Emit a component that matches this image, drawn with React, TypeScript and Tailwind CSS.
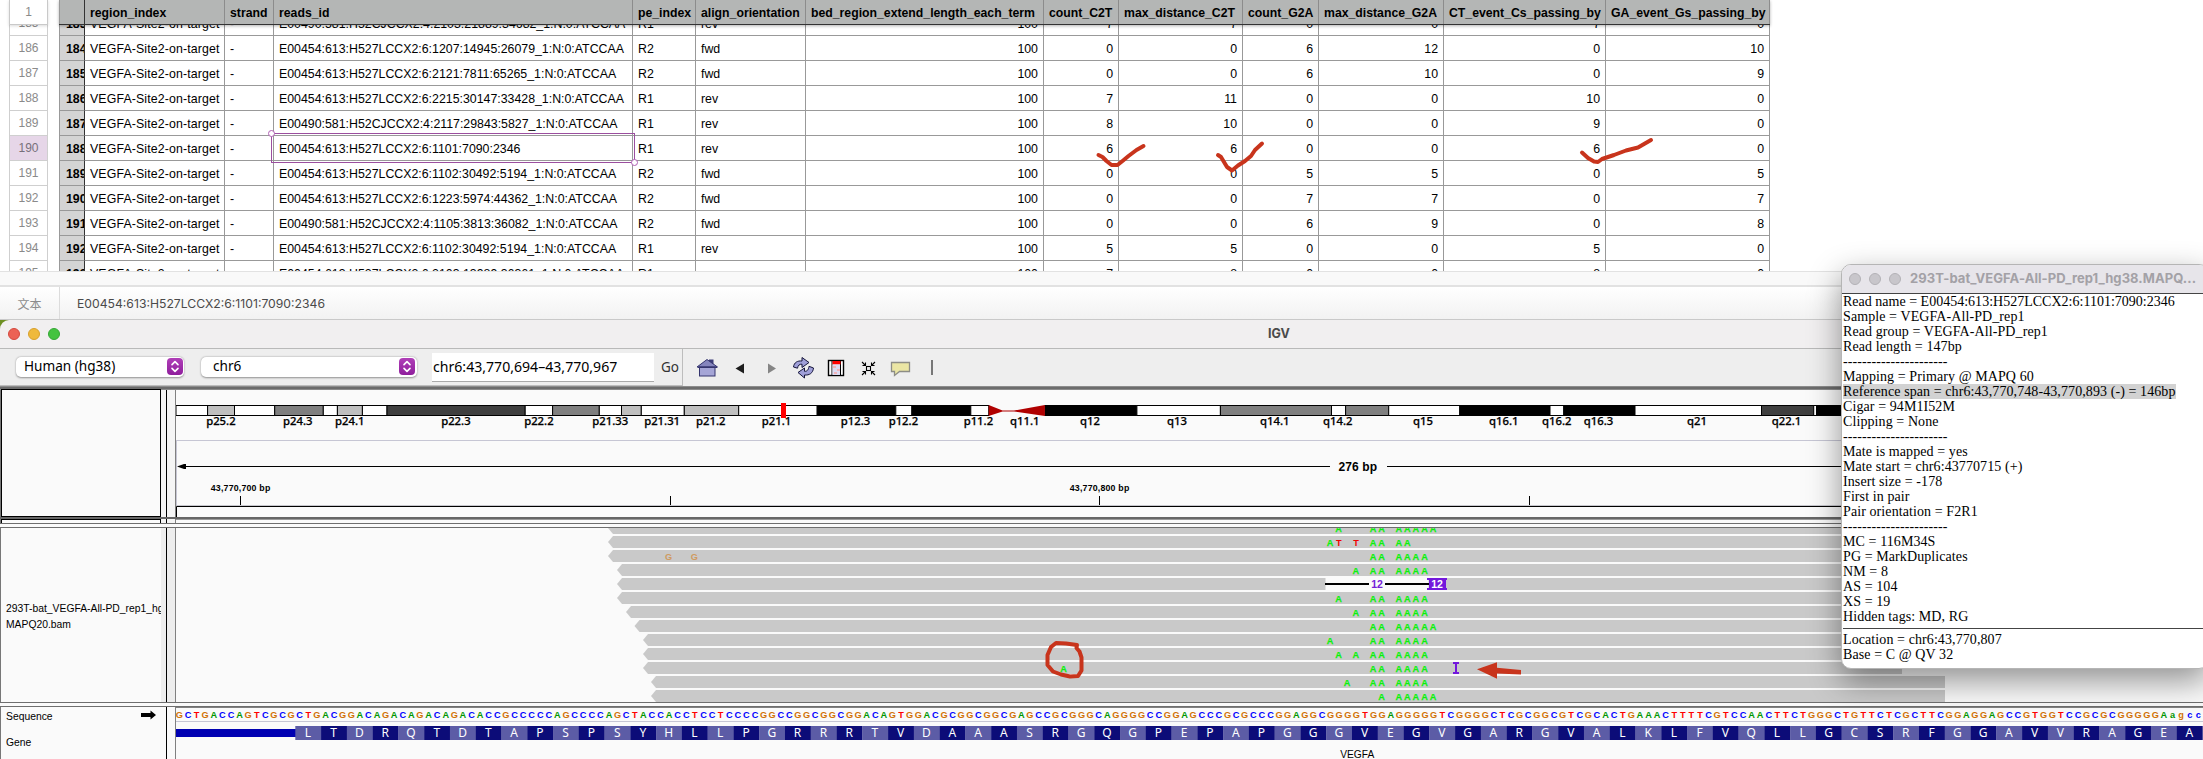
import React from "react";

const GRID =
  "grid grid-cols-[25px_140px_49px_359px_63px_110px_238px_75px_124px_76px_125px_162px_165px] w-[1711px] shrink-0";

const HEADERS = [
  "region_index", "strand", "reads_id", "pe_index", "align_orientation",
  "bed_region_extend_length_each_term", "count_C2T", "max_distance_C2T", "count_G2A",
  "max_distance_G2A", "CT_event_Cs_passing_by", "GA_event_Gs_passing_by",
];

type Row = [number, number, string, string, string, number, number, number, number, number, number];
const ROWS: Row[] = [
  [185, 183, "E00490:581:H52CJCCX2:4:2103:21889:34682_1:N:0:ATCCAA", "R1", "rev", 7, 7, 0, 0, 7, 0],
  [186, 184, "E00454:613:H527LCCX2:6:1207:14945:26079_1:N:0:ATCCAA", "R2", "fwd", 0, 0, 6, 12, 0, 10],
  [187, 185, "E00454:613:H527LCCX2:6:2121:7811:65265_1:N:0:ATCCAA", "R2", "fwd", 0, 0, 6, 10, 0, 9],
  [188, 186, "E00454:613:H527LCCX2:6:2215:30147:33428_1:N:0:ATCCAA", "R1", "rev", 7, 11, 0, 0, 10, 0],
  [189, 187, "E00490:581:H52CJCCX2:4:2117:29843:5827_1:N:0:ATCCAA", "R1", "rev", 8, 10, 0, 0, 9, 0],
  [190, 188, "E00454:613:H527LCCX2:6:1101:7090:2346", "R1", "rev", 6, 6, 0, 0, 6, 0],
  [191, 189, "E00454:613:H527LCCX2:6:1102:30492:5194_1:N:0:ATCCAA", "R2", "fwd", 0, 0, 5, 5, 0, 5],
  [192, 190, "E00454:613:H527LCCX2:6:1223:5974:44362_1:N:0:ATCCAA", "R2", "fwd", 0, 0, 7, 7, 0, 7],
  [193, 191, "E00490:581:H52CJCCX2:4:1105:3813:36082_1:N:0:ATCCAA", "R2", "fwd", 0, 0, 6, 9, 0, 8],
  [194, 192, "E00454:613:H527LCCX2:6:1102:30492:5194_1:N:0:ATCCAA", "R1", "rev", 5, 5, 0, 0, 5, 0],
  [195, 193, "E00454:613:H527LCCX2:6:2103:13989:36361_1:N:0:ATCCAA", "R1", "rev", 7, 8, 0, 0, 8, 0],
];

function Sheet() {
  return (
    <div className="relative h-[271px] overflow-hidden bg-white text-[12.35px] text-black">
      <div className="relative z-10 flex h-[25px]">
        <div className="ml-[9px] mr-[11px] flex w-[39px] items-center justify-center border-x border-b border-[#c9c9c9] bg-white text-[12px] text-[#8a8a8a] shadow-[0_1px_3px_rgba(0,0,0,0.15)]">
          1
        </div>
        <div className={`${GRID} border-b border-[#333] bg-[#b4b6b5] text-[12.25px] font-bold shadow-[0_1px_3px_rgba(0,0,0,0.3)]`}>
          <div className="border-l border-[#999]" />
          {HEADERS.map((h, i) => (
            <div
              key={h}
              className={`flex items-center whitespace-nowrap border-l pl-[5px] pt-[2px] ${
                i === 0 ? "border-[#333]" : "border-[#8c8c8c]"
              } ${i === 11 ? "border-r" : ""}`}
            >
              {h}
            </div>
          ))}
        </div>
      </div>
      <div className="-mt-[15px]">
        {ROWS.map((r) => (
          <div key={r[0]} className="flex h-[25px]">
            <div
              className={`ml-[9px] mr-[11px] flex w-[39px] items-center justify-center border-x border-t border-[#cfcfcf] text-[12px] ${
                r[0] === 190 ? "bg-[#e6d6e8] text-[#77707a]" : "bg-white text-[#8a8a8a]"
              }`}
            >
              {r[0]}
            </div>
            <div className={GRID}>
              <div className="flex items-center overflow-hidden border-l border-t border-[#999] bg-[#d4d4d4] pl-[6px] pt-[2px] font-bold">
                {r[1]}
              </div>
              <div className="flex items-center whitespace-nowrap border-l border-t border-l-[#333] border-t-[#999] pl-[5px] pt-[2px] tracking-[0.12px]">
                VEGFA-Site2-on-target
              </div>
              <div className="flex items-center border-l border-t border-[#999] pl-[5px] pt-[2px]">-</div>
              {[r[2], r[3], r[4]].map((t, i) => (
                <div key={i} className="flex items-center whitespace-nowrap border-l border-t border-[#999] pl-[5px] pt-[2px]">
                  {t}
                </div>
              ))}
              {[100, r[5], r[6], r[7], r[8], r[9], r[10]].map((t, i) => (
                <div
                  key={i}
                  className={`flex items-center justify-end border-l border-t border-[#999] pr-[5px] pt-[2px] ${i === 6 ? "border-r" : ""}`}
                >
                  {t}
                </div>
              ))}
            </div>
          </div>
        ))}
      </div>
      <div className="absolute left-[271px] top-[133px] h-[30px] w-[364px] border border-[#9b4f9f]">
        <div className="absolute -left-[4px] -top-[4px] size-[7px] rounded-full border border-[#b05fb4] bg-white" />
        <div className="absolute -bottom-[4px] -right-[4px] size-[7px] rounded-full border border-[#b05fb4] bg-white" />
      </div>
    </div>
  );
}

function FormatBar() {
  return (
    <>
      <div className="h-[16px] border-b-2 border-t border-b-[#e2e2e2] border-t-[#e2e2e2] bg-[#f9f9f9]" />
      <div className="flex h-[33px] items-center border-b border-[#c9c9c9] bg-linear-to-b from-white to-[#f2f2f2] font-[Inter]">
        <div className="flex h-full w-[60px] items-center justify-center border-r border-[#dcdcdc] pt-px font-['Noto_Sans_CJK_SC',sans-serif] text-[12px] text-[#8c8c8c]">
          文本
        </div>
        <div className="pl-[17px] pt-[2px] text-[12.2px] text-[#4a4a4a]">E00454:613:H527LCCX2:6:1101:7090:2346</div>
      </div>
    </>
  );
}

function Stepper() {
  return (
    <svg width="16" height="17" viewBox="0 0 16 17" className="shrink-0">
      <defs>
        <linearGradient id="purple" x1="0" y1="0" x2="0" y2="1">
          <stop offset="0" stopColor="#b03fb8" />
          <stop offset="1" stopColor="#8f1e9c" />
        </linearGradient>
      </defs>
      <rect width="16" height="17" rx="4" fill="url(#purple)" />
      <path d="M5 6.6 8 3.6l3 3M5 10.4l3 3 3-3" fill="none" stroke="#fff" strokeWidth="1.6" strokeLinecap="round" strokeLinejoin="round" />
    </svg>
  );
}

function ToolIcons() {
  return (
    <svg width="260" height="38" viewBox="683 348 260 38" className="shrink-0">
      <path d="M709 362v-3.5h4.5v5z" fill="#3d3d78" />
      <path d="M697 366l10-7.5 10.500 7.500z" fill="#8585bd" stroke="#35356e" strokeWidth="1" />
      <rect x="699.500" y="366" width="15.500" height="9" fill="#a5a5d6" stroke="#35356e" />
      <path d="M698 366.500h19" stroke="#35356e" />
      <path d="M735.500 367.500l8.500-5v10z" fill="#1d1d1d" />
      <path d="M776 367.500l-8-5v10z" fill="#858585" />
      <g fill="#9f9fd8" stroke="#15153a" strokeWidth="1" strokeLinejoin="round">
        <path d="M793.500 366c.5-4.500 4-6.500 8.500-6v-3.500l7 5-7 5v-3.300c-2.500-.2-4 1-4.500 4z" />
        <path d="M813.500 367c-.5 5-4 7.500-9 7v3l-6.500-5.500 6.500-4.500v3.300c2.500.2 4-1.300 4.500-5z" />
      </g>
      <rect x="828.500" y="359.500" width="15" height="15" fill="#fff" stroke="#000" strokeWidth="1.400" />
      <path d="M832 360v14M840.500 360v14" stroke="#000" />
      <rect x="832.500" y="360" width="8" height="3.500" fill="#f00" />
      <rect x="832.500" y="363.500" width="7.500" height="10.500" fill="#dcdcf4" />
      <path d="M833 366h3m1 3h3m-6 3h3" stroke="#f3b4b8" strokeWidth="2" />
      <g stroke="#000" strokeWidth="1.100" fill="none">
        <rect x="866.500" y="365.500" width="4" height="4" />
        <path d="M862 361l3.500 3.500M865.500 361.500v3h-3M875 361l-3.500 3.500M871.500 361.500v3h3M862 374l3.500-3.500M865.500 373.500v-3h-3M875 374l-3.500-3.500M871.500 373.500v-3h3" />
      </g>
      <path d="M892.500 362.500h18v9h-10l-5 4v-4h-3z" transform="translate(-1 -1)" fill="#ebe6a4" stroke="#8d8d86" strokeWidth="1.300" />
      <path d="M932 359v15" stroke="#777" strokeWidth="2" />
    </svg>
  );
}

function Toolbar() {
  return (
    <div className="flex h-[38px] items-center border-t border-[#b9b9b9] bg-[#eeeeee] font-['Noto_Sans'] text-[13.6px] text-black">
      <div className="flex h-full w-[683px] items-center border-b border-r border-[#bdbdbd] pl-[16px]">
        <div className="-mt-px flex h-[20px] w-[168px] items-center justify-between rounded-[5px] bg-white pl-[8px] pr-[1px] shadow-[0_0.5px_2px_rgba(0,0,0,0.4)]">
          Human (hg38) <Stepper />
        </div>
        <div className="-mt-px ml-[17px] flex h-[20px] w-[216px] items-center justify-between rounded-[5px] bg-white pl-[12px] pr-[2px] shadow-[0_0.5px_2px_rgba(0,0,0,0.4)]">
          chr6 <Stepper />
        </div>
        <div className="ml-[15px] flex h-[29px] w-[222px] items-center border-b border-[#a9a9a9] bg-white pl-px text-[14.1px]">
          chr6:43,770,694–43,770,967
        </div>
        <div className="pl-[7px] text-[13.500px] text-[#333]">Go</div>
      </div>
      <ToolIcons />
    </div>
  );
}

const BANDS: [number, number, string][] = [
  [176, 207.6, "#fff"], [207.6, 234.5, "#bfbfbf"], [234.5, 274.7, "#fff"], [274.7, 323.3, "#7f7f7f"],
  [323.3, 337.4, "#fff"], [337.4, 362.4, "#bfbfbf"], [362.4, 387, "#fff"], [387, 525.2, "#3f3f3f"],
  [525.2, 552.6, "#fff"], [552.6, 599.3, "#7f7f7f"], [599.3, 621.5, "#fff"], [621.5, 641.3, "#bfbfbf"],
  [641.3, 684.3, "#fff"], [684.3, 738.7, "#bfbfbf"], [738.7, 817.2, "#fff"], [817.2, 895.8, "#000"],
  [895.8, 911.9, "#fff"], [911.9, 970.8, "#000"], [970.8, 988.7, "#fff"], [1044.9, 1136.9, "#000"],
  [1136.9, 1220.4, "#fff"], [1220.4, 1331.5, "#7f7f7f"], [1331.5, 1345.6, "#fff"], [1345.6, 1388.7, "#7f7f7f"],
  [1388.7, 1459.8, "#fff"], [1459.8, 1550, "#000"], [1550, 1563.8, "#fff"], [1563.8, 1635, "#000"],
  [1635, 1761.5, "#fff"], [1761.5, 1813.7, "#3f3f3f"], [1813.7, 1816.5, "#fff"], [1816.5, 1900, "#000"],
];
const BAND_LABELS: [string, number][] = [
  ["p25.2", 220.9], ["p24.3", 297.8], ["p24.1", 349.7], ["p22.3", 455.9], ["p22.2", 538.9], ["p21.33", 610.2],
  ["p21.31", 662.1], ["p21.2", 710.7], ["p21.1", 776.6], ["p12.3", 855.6], ["p12.2", 903.4], ["p11.2", 978.4],
  ["q11.1", 1024.8], ["q12", 1090], ["q13", 1177], ["q14.1", 1274.8], ["q14.2", 1337.7], ["q15", 1423],
  ["q16.1", 1503.7], ["q16.2", 1556.7], ["q16.3", 1598.6], ["q21", 1697], ["q22.1", 1786.5],
];

function Ideogram() {
  return (
    <svg width="2027" height="127" viewBox="176 390 2027 127" className="block">
      {BANDS.map(([a, b, c]) => (
        <rect key={a} x={a} y="405.500" width={b - a} height="10" fill={c} stroke="#000" strokeWidth="1" />
      ))}
      <path d="M988.700 405v11L1002.500 411.500h11.600L1044.900 416v-11L1014 410.500h-11.500z" fill="#b00000" />
      <rect x="781" y="403" width="5" height="15" fill="#f00" />
      {BAND_LABELS.map(([t, x]) => (
        <text key={t} x={x} y="425" textAnchor="middle" className="font-['Noto_Sans'] text-[11.3px] font-medium" stroke="#000" strokeWidth="0.25">
          {t}
        </text>
      ))}
      <path d="M176 440.500H2203" stroke="#c6c6d4" />
      <path d="M176.500 440V505" stroke="#c6c6d4" />
      <path d="M180 466.500H1330M1387 466.500H2203" stroke="#000" />
      <path d="M177 466.500l7-2.500h2v5h-2z" fill="#000" />
      <text x="1357.800" y="471" textAnchor="middle" textLength="38.700" className="font-['Liberation_Sans'] text-[12px] font-bold">276 bp</text>
      <text x="240.500" y="490.500" textAnchor="middle" textLength="59.500" className="font-['Liberation_Sans'] text-[8.800px] font-bold">43,770,700 bp</text>
      <text x="1099.500" y="490.500" textAnchor="middle" textLength="59.500" className="font-['Liberation_Sans'] text-[8.800px] font-bold">43,770,800 bp</text>
      <path d="M240.500 496v9M670.500 496v9M1099.500 496v9M1529.500 496v9" stroke="#000" />
      <path d="M176 505.500H2203" stroke="#c6c6cc" />
      <path d="M176.500 517V506.500H2203" fill="none" stroke="#000" />
    </svg>
  );
}

const BASE_W = 8.591;
const baseX = (i: number) => 179.4 + BASE_W * i;

const TIPS = [608, 608, 608, 617, 617, 617, 626, 634.5, 643, 643, 643, 651, 651];
const COMMON = [139, 140, 142, 143, 144, 145];
const READ_A: number[][] = [
  [135, ...COMMON, 146],
  [134, 139, 140, 142, 143],
  COMMON,
  [137, ...COMMON],
  [],
  [135, ...COMMON],
  [137, ...COMMON],
  [...COMMON, 146],
  [134, ...COMMON],
  [135, 137, ...COMMON],
  [103, ...COMMON],
  [136, ...COMMON],
  [140, 142, 143, 144, 145, 146],
];

function Reads() {
  const letter = "font-['Liberation_Sans'] text-[9.2px] font-bold";
  return (
    <svg width="2027" height="174" viewBox="176 528 2027 174" className="block">
      {TIPS.map((x, k) => {
        const y = 522 + 14 * k;
        const end = k > 10 ? 1945 : 1902;
        return (
          <g key={k}>
            <path d={`M${x} ${y + 6}l5-6H${end}v12H${x + 5}z`} fill="#c9c9c9" />
            {READ_A[k].map((i) => (
              <text key={i} x={baseX(i) - 0.6} y={y + 9.5} textAnchor="middle" fill="#0cf00c" stroke="#0cf00c" strokeWidth="0.25" className={letter}>A</text>
            ))}
          </g>
        );
      })}
      <text x={baseX(135) - 0.3} y="545.500" textAnchor="middle" fill="#f00000" className={letter}>T</text>
      <text x={baseX(137) - 0.3} y="545.500" textAnchor="middle" fill="#f00000" className={letter}>T</text>
      <text x={baseX(57) - 0.6} y="559.500" textAnchor="middle" fill="#cf9a60" className={letter}>G</text>
      <text x={baseX(60) - 0.6} y="559.500" textAnchor="middle" fill="#cf9a60" className={letter}>G</text>
      <rect x="1325.500" y="578" width="103" height="12" fill="#fafafa" />
      <path d="M1325 584H1429" stroke="#000" strokeWidth="2" />
      <rect x="1369" y="578" width="16" height="12" fill="#fafafa" />
      <text x="1377" y="588" textAnchor="middle" fill="#7420d8" className="font-['Liberation_Sans'] text-[10.5px] font-bold">12</text>
      <path d="M1427 578h20v2h-1v8h1v2h-20v-2h2v-8h-2z" fill="#7318dc" />
      <text x="1437" y="588" textAnchor="middle" fill="#fff" className="font-['Liberation_Sans'] text-[10.5px] font-bold">12</text>
      <path d="M1453 663h6M1456 663v10M1453 673h6" stroke="#7318dc" strokeWidth="2" />
    </svg>
  );
}

const SEQ =
  "GCTGACCAGTCGCG" +
  "CTGACGGACAGACAGACAGACACCGCCCCCAGCCCCAGCTACCACCTCCTCCCCGGCCGGCGGCGGACAGTGGACGCGGCGGCGAGCCGCGGGCAGGGGCCGGAGCCCGCGCCCGGAGGCGGGGTGGAGGGGGTCGGG" +
  "GCTCGCGGCGTCGCACTGAAACTTTTCGTCCAACTTCTGGGCTGTTCTCGCTTCGGAGGAGCCGTGGTCCGCGCGGGGGAagcc";
const AMINO = "LTDRQTDTAPSPSYHLLPGRRRTVDAAASRGQGPEPAPGGGVEGVGARGVALKLFVQLLGCSRFGGAVVRAGEA";
const BASE_COLORS: Record<string, string> = { A: "#009600", C: "#0000ff", G: "#d17105", T: "#ff0000" };

function SequenceTrack() {
  return (
    <svg width="2027" height="52" viewBox="176 707 2027 52" className="block">
      <path d="M176 707.500H2203" stroke="#808080" />
      {SEQ.split("").map((b, i) => (
        <text key={i} x={baseX(i)} y="718.300" textAnchor="middle" fill={BASE_COLORS[b.toUpperCase()]} className="font-['Liberation_Sans'] text-[9.200px] font-bold">
          {b}
        </text>
      ))}
      <path d="M176 721.500H2203" stroke="#c6c6d4" />
      <rect x="176" y="729" width="120" height="8" fill="#0000b2" />
      {AMINO.split("").map((a, j) => {
        const x = 295.3 + 3 * BASE_W * j;
        return (
          <g key={j}>
            <rect x={x} y="726" width={3 * BASE_W + 0.2} height="14" fill={j % 2 ? "#0c0c78" : "#5c5ca6"} />
            <text x={x + 12.600} y="737.300" textAnchor="middle" fill="#fff" className="font-['Noto_Sans'] text-[12px]">{a}</text>
          </g>
        );
      })}
      <text x="1357.200" y="758.300" textAnchor="middle" className="font-['Liberation_Sans'] text-[10.2px]">VEGFA</text>
    </svg>
  );
}

function Gutter({ tint }: { tint: string }) {
  return (
    <>
      <div className={`w-[5px] ${tint}`} />
      <div className="w-px bg-black" />
      <div className={`w-[8px] ${tint}`} />
      <div className="w-px bg-[#808080]" />
    </>
  );
}

function Igv() {
  return (
    <div className="relative bg-[#6d8f22]">
      <div className="flex h-[28px] items-center rounded-tl-[9px] bg-[#f1eff0]">
        <div className="ml-[8px] flex gap-[8px]">
          <div className="size-[12px] rounded-full border border-[#d5493f] bg-[#ec6255]" />
          <div className="size-[12px] rounded-full border border-[#d9a02c] bg-[#efb93c]" />
          <div className="size-[12px] rounded-full border border-[#35a835] bg-[#44c340]" />
        </div>
        <div className="ml-[1208px] font-[Inter] text-[12.500px] font-bold text-[#4a4a4a]">IGV</div>
      </div>
      <Toolbar />
      <div className="h-[4px] border-y border-[#8c8c8c] bg-[#6c6c6c]" />
      <div className="bg-[#fafafa]">
        <div className="flex h-[127px] border-l border-[#777]">
          <div className="-mt-px w-[160px] border border-black" />
          <Gutter tint="bg-[#f5f5f5]" />
          <Ideogram />
        </div>
        <div className="h-[2px] bg-[#666]" />
        <div className="flex h-[4px] border-l border-[#777]">
          <div className="w-[160px] border-x border-t border-black" />
          <Gutter tint="bg-[#f5f5f5]" />
          <div className="grow border-t border-[#999]" />
        </div>
        <div className="h-[5px] border-y border-[#6e6e6e]" />
        <div className="flex h-[174px] border-l border-[#777]">
          <div className="flex w-[160px] flex-col justify-center overflow-hidden whitespace-nowrap pl-[5px] pt-[3px] text-[10.35px] leading-[16px]">
            <span>293T-bat_VEGFA-All-PD_rep1_hg38.</span>
            <span>MAPQ20.bam</span>
          </div>
          <Gutter tint="bg-[#ededed]" />
          <Reads />
        </div>
        <div className="h-[5px] border-y border-[#6e6e6e]" />
        <div className="flex h-[52px] border-l border-[#777]">
          <div className="flex w-[160px] flex-col pl-[5px] text-[10.35px] leading-[26px]">
            <div className="-mt-[3px] flex items-center justify-between pr-[5px]">
              Sequence
              <svg width="15" height="10" viewBox="0 0 15 10" className="-mt-[4px]">
                <path d="M0 3h9.500V.5L15 5 9.500 9.500V7H0z" />
              </svg>
            </div>
            <div>Gene</div>
          </div>
          <Gutter tint="bg-[#fafafa]" />
          <SequenceTrack />
        </div>
      </div>
    </div>
  );
}

const INFO = [
  "Read name = E00454:613:H527LCCX2:6:1101:7090:2346", "Sample = VEGFA-All-PD_rep1",
  "Read group = VEGFA-All-PD_rep1", "Read length = 147bp", "----------------------",
  "Mapping = Primary @ MAPQ 60", "Reference span = chr6:43,770,748-43,770,893 (-) = 146bp",
  "Cigar = 94M1I52M", "Clipping = None", "----------------------", "Mate is mapped = yes",
  "Mate start = chr6:43770715 (+)", "Insert size = -178", "First in pair", "Pair orientation = F2R1",
  "----------------------", "MC = 116M34S", "PG = MarkDuplicates", "NM = 8", "AS = 104", "XS = 19",
  "Hidden tags: MD, RG",
];

function ReadPopup() {
  return (
    <div className="absolute left-[1841px] top-[264px] h-[405px] w-[368px] overflow-visible">
      <div className="h-full overflow-hidden rounded-[10px] border border-[#b5b5b5] bg-white shadow-[0_12px_32px_rgba(0,0,0,0.42)]">
        <div className="flex h-[29px] items-center border-b border-[#444] bg-[#e7e5ea] pl-[7px]">
          <div className="flex gap-[8px]">
            <div className="size-[12px] rounded-full border border-[#b3b1b6] bg-[#c8c6cb]" />
            <div className="size-[12px] rounded-full border border-[#b3b1b6] bg-[#c8c6cb]" />
            <div className="size-[12px] rounded-full border border-[#b3b1b6] bg-[#c8c6cb]" />
          </div>
          <div className="whitespace-nowrap pl-[9px] font-[Inter] text-[13px] font-bold tracking-[0.07px] text-[#a3a1a6]">
            293T-bat_VEGFA-All-PD_rep1_hg38.MAPQ...
          </div>
        </div>
        <div className="whitespace-pre pl-px font-['Liberation_Serif'] text-[14px] leading-[15px] tracking-[0.09px] text-black">
          {INFO.map((t, i) => (
            <div key={i} className={i === 6 ? "w-fit bg-[#d2d2d2]" : i === 0 ? "tracking-[0.01px]" : ""}>{t}</div>
          ))}
          <div className="mb-[3px] mt-[4px] border-t border-[#444]" />
          <div>Location = chr6:43,770,807</div>
          <div>Base = C @ QV 32</div>
        </div>
      </div>
    </div>
  );
}

function Annotations() {
  return (
    <svg width="2203" height="759" viewBox="0 0 2203 759" className="pointer-events-none absolute left-0 top-0">
      <g fill="none" stroke="#c8341c" strokeWidth="4" strokeLinecap="round" strokeLinejoin="round">
        <path d="M1098.500 155l4 2 4 4 5 4h6l5-4 6-5 8-6 7-4" />
        <path d="M1218 155l3 2 6 10 5 3.500 6-5 7-4.500 6-5 4-6 7-6.500" />
        <path d="M1582 152.500l6 5.500 6 3.500 4 .5 4-3 12-4 12-4.500 12-3 13-7.500" />
        <path d="M1077 645l-11-1.500-10-.5-5 4-3.500 8v10l5.500 6.500 8 3 9 2 8-.5 3.500-5.500v-13l-2-6-3-3.500.5-3" />
      </g>
      <path d="M1477 669.300l20-7v5.500l24 2.200v4.500l-24-1v5.200z" fill="#c8341c" />
    </svg>
  );
}

export default function App() {
  return (
    <div className="relative h-[759px] w-[2203px] overflow-hidden bg-white font-['Liberation_Sans',Arial,sans-serif]">
      <Sheet />
      <FormatBar />
      <Igv />
      <ReadPopup />
      <Annotations />
    </div>
  );
}
